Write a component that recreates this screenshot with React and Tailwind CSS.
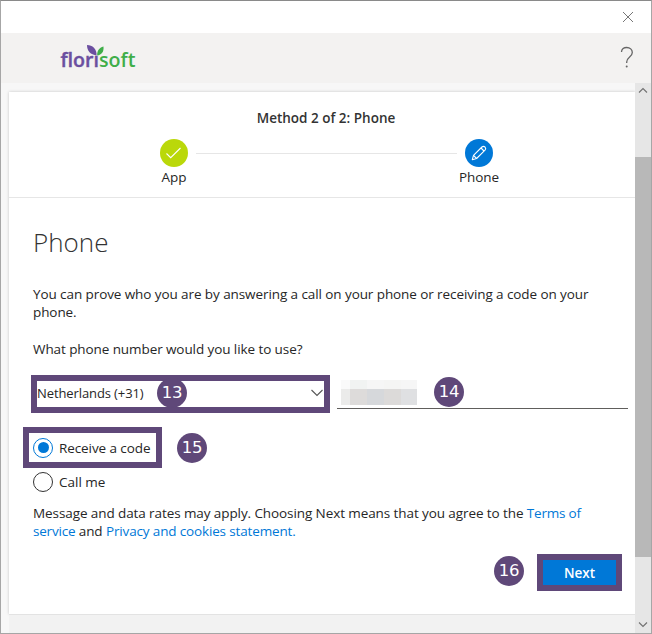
const mosaicTop = ['#fafafa', '#f1f3f2', '#f6f6f6', '#f5f5f4', '#f6f6f6'];
const mosaicBottom = ['#ebebea', '#dddbda', '#d6d8db', '#dcdad9', '#dfe0e2'];
const mosaicWidths = [9, 17, 17, 17, 16];

function Badge({ n, className }) {
  return (
    <div className={`absolute flex h-[30px] w-[30px] items-center justify-center rounded-full bg-[#5f4879] font-['DejaVu_Sans',sans-serif] text-[16.5px] leading-none tracking-[-0.3px] text-white ${className}`}>
      {n}
    </div>
  );
}

function Logo() {
  return (
    <svg className="block h-[28px] w-[78px]" viewBox="0 0 78 28">
      <path d="M28 1C33.500 1 37.800 5 37.600 11.400C31.500 10.700 28 7 28 1Z" fill="#6b4fa0" />
      <path d="M44.500 2.500C45 8 42.500 11 38.200 11.400C37.900 7.200 40 3.500 44.500 2.500Z" fill="#3fae49" />
      <text x="1.500" y="23.300" fontFamily="'Open Sans', sans-serif" fontWeight="600" fontSize="19" fill="#6b4fa0" stroke="#6b4fa0" strokeWidth="0.400" textLength="38.500" lengthAdjust="spacingAndGlyphs">florı</text>
      <text x="40" y="23.300" fontFamily="'Open Sans', sans-serif" fontWeight="600" fontSize="19" fill="#3fae49" textLength="36.500" lengthAdjust="spacingAndGlyphs">soft</text>
    </svg>
  );
}

function Steps() {
  return (
    <div className="mt-[12px] flex items-start">
      <div className="ml-[147px] flex w-[36px] flex-col items-center">
        <div className="h-7 w-7 rounded-full bg-[#bad80a]">
          <svg viewBox="0 0 28 28" fill="none" stroke="#fff" strokeWidth="1.100">
            <path d="M6.500 14.500L10.700 18.700L20.500 9" />
          </svg>
        </div>
        <span className="mt-px text-[13.5px] leading-[18px]">App</span>
      </div>
      <div className="ml-[4px] mt-[14px] h-px w-[261px] bg-[#e6e6e6]" />
      <div className="flex w-[44px] flex-col items-center">
        <div className="h-7 w-7 rounded-full bg-[#0078d7]">
          <svg viewBox="0 0 28 28" fill="none" stroke="#fff" strokeWidth="1.100" strokeLinejoin="round">
            <path d="M7.300 20.700L8.500 16.400L16.900 8Q18.600 6.600 20.100 8.100Q21.400 9.600 20 11.200L11.600 19.500Z" />
            <path d="M16 9L19 12M8.500 16.400L11.600 19.500" />
          </svg>
        </div>
        <span className="mt-px text-[13.5px] leading-[18px] tracking-[-0.1px]">Phone</span>
      </div>
    </div>
  );
}

function Scrollbar() {
  return (
    <div className="flex w-4 shrink-0 flex-col bg-[#e6e6e6]">
      <svg className="h-[74px] w-4" viewBox="0 0 16 74" fill="none" stroke="#707070" strokeWidth="1.100">
        <path d="M4 9.500L8 5.500L12 9.500" />
      </svg>
      <div className="h-[400px] bg-[#b8b8b8]" />
      <svg className="mt-auto h-4 w-4" viewBox="0 0 16 16" fill="none" stroke="#707070" strokeWidth="1.100">
        <path d="M4 5.500L8 9.500L12 5.500" />
      </svg>
    </div>
  );
}

export default function App() {
  return (
    <div className="relative flex h-[634px] w-[652px] flex-col overflow-hidden border border-[#a6a6a6] border-t-[#8a8a8a] bg-white font-['Open_Sans','Noto_Sans',sans-serif] text-[13.5px] text-[#262626]">
      <div className="flex h-8 shrink-0 items-center justify-end pr-[17px]">
        <svg className="h-3 w-3" viewBox="0 0 12 12" stroke="#777" strokeWidth="1">
          <path d="M1 1L11 11M11 1L1 11" />
        </svg>
      </div>
      <header className="flex h-[50px] shrink-0 items-center justify-between bg-[#f3f2f1] pl-[58px] pr-[17px]">
        <Logo />
        <svg className="h-6 w-[14px]" viewBox="0 0 14 24" fill="none" stroke="#666" strokeWidth="1.300">
          <path d="M1.500 6C1.500 3 4 1.500 6.700 1.500C10 1.500 12.300 3.500 12.300 6.500C12.300 11 6.700 11 6.700 16V17" />
          <circle cx="6.700" cy="20.500" r="1" fill="#666" stroke="none" />
        </svg>
      </header>
      <div className="flex min-h-0 flex-1">
        <main className="flex min-w-0 flex-1 flex-col bg-[#f7f7f7] pl-2 pt-[9px]">
          <div className="h-[522px] bg-white shadow-[0_0_3px_rgba(0,0,0,0.2)]">
            <section className="h-[106px] border-b border-[#e6e6e6] pt-[17px]">
              <h2 className="pl-[8px] text-center text-[13.5px] font-semibold leading-[18px] text-[#333]">Method 2 of 2: Phone</h2>
              <Steps />
            </section>
            <section className="pl-6 leading-[18px]">
              <h1 className="pt-[27px] text-[26px] font-light leading-[34px] text-[#333]">Phone</h1>
              <p className="mt-[26px] whitespace-nowrap tracking-[-0.085px]">You can prove who you are by answering a call on your phone or receiving a code on your<br />phone.</p>
              <p className="mt-[19px] tracking-[-0.085px]">What phone number would you like to use?</p>
              <div className="-ml-[2px] mt-[17px] flex">
                <div className="flex h-[38px] w-[299px] items-center justify-between border-[6px] border-[#5f4879] pr-px text-[13px]">
                  <span className="pb-[2px] tracking-[-0.1px]">Netherlands (+31)</span>
                  <svg className="mb-[2px] h-3 w-3" viewBox="0 0 12 12" fill="none" stroke="#555" strokeWidth="1.100">
                    <path d="M0.500 3L6 8.500L11.500 3" />
                  </svg>
                </div>
                <div className="ml-[7px] h-[34px] w-[291px] border-b border-[#605e5c] pl-1 pt-[5px]">
                  <div className="flex h-[9px]">
                    {mosaicTop.map((c, i) => <div key={i} style={{ width: mosaicWidths[i], background: c }} />)}
                  </div>
                  <div className="flex h-[16px]">
                    {mosaicBottom.map((c, i) => <div key={i} style={{ width: mosaicWidths[i], background: c }} />)}
                  </div>
                </div>
              </div>
              <div className="-ml-[10px] mt-[14px] flex h-[41px] w-[139px] items-center border-[6px] border-[#5f4879] pl-1">
                <div className="flex h-5 w-5 items-center justify-center rounded-full border border-[#0078d7]">
                  <div className="h-[11px] w-[11px] rounded-full bg-[#0078d7]" />
                </div>
                <span className="ml-[6px] whitespace-nowrap tracking-[-0.085px]">Receive a code</span>
              </div>
              <div className="mt-1 flex h-5 items-center">
                <div className="h-5 w-5 rounded-full border border-[#333]" />
                <span className="ml-[6px]">Call me</span>
              </div>
              <p className="mt-[12px] whitespace-nowrap tracking-[-0.09px]">Message and data rates may apply. Choosing Next means that you agree to the <span className="tracking-[-0.2px] text-[#0078d7]">Terms of<br />service</span> and <span className="tracking-[-0.15px] text-[#0078d7]">Privacy and cookies statement.</span></p>
              <div className="mr-[13px] mt-[14px] flex justify-end">
                <button className="h-[37px] w-[85px] border-[6px] border-[#5f4879] bg-[#0078d7] text-[13.5px] font-semibold text-white">Next</button>
              </div>
            </section>
          </div>
          <div className="flex-1 border-t border-[#e3e3e3] bg-[#f2f2f2]" />
        </main>
        <Scrollbar />
      </div>
      <Badge n="13" className="left-[156px] top-[377px]" />
      <Badge n="14" className="left-[433px] top-[376px]" />
      <Badge n="15" className="left-[176px] top-[432px]" />
      <Badge n="16" className="left-[493px] top-[555px]" />
    </div>
  );
}
